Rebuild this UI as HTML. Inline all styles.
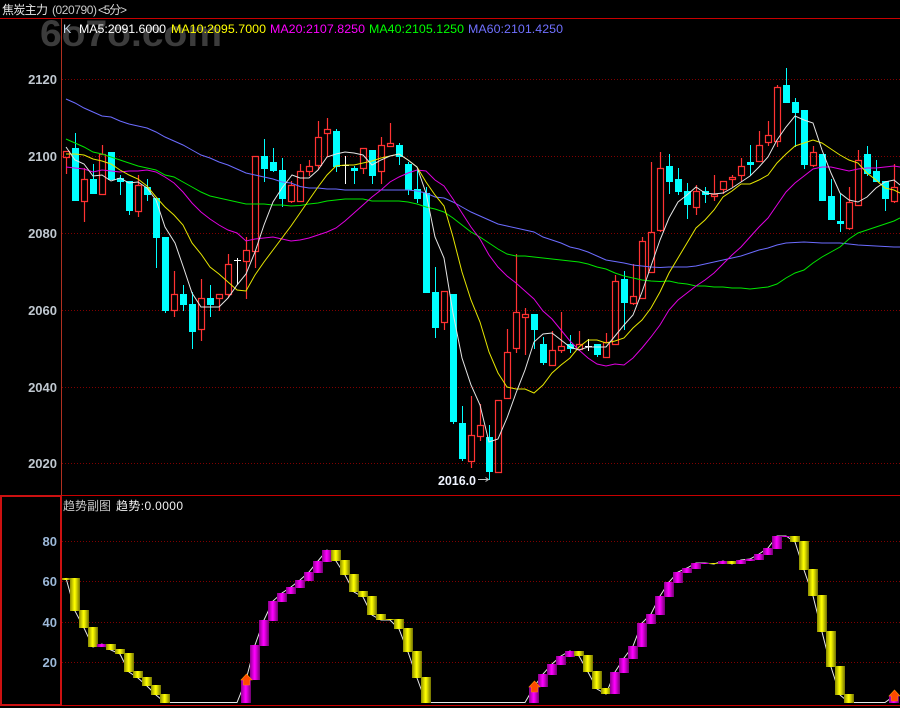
<!DOCTYPE html>
<html><head><meta charset="utf-8"><title>焦炭主力</title>
<style>html,body{margin:0;padding:0;background:#000;width:900px;height:708px;overflow:hidden}svg{display:block}
text{font-family:"Liberation Sans","Noto Sans CJK SC",sans-serif}</style></head><body>
<svg width="900" height="708" viewBox="0 0 900 708" xmlns="http://www.w3.org/2000/svg">
<defs>
<linearGradient id="y"><stop offset="0" stop-color="#8c8c00"/><stop offset=".45" stop-color="#ffff00"/><stop offset=".55" stop-color="#f0f000"/><stop offset="1" stop-color="#707000"/></linearGradient>
<linearGradient id="m"><stop offset="0" stop-color="#8c008c"/><stop offset=".45" stop-color="#ff00ff"/><stop offset=".55" stop-color="#f000f0"/><stop offset="1" stop-color="#700070"/></linearGradient>
</defs>
<rect width="900" height="708" fill="#000"/>
<text x="40" y="46" font-size="37" font-weight="bold" fill="#3c3c3c" textLength="182" lengthAdjust="spacingAndGlyphs">6o7o.com</text>
<rect width="900" height="18" fill="#000"/>
<g stroke="#800000" stroke-width="1" stroke-dasharray="1 2" fill="none">
<path d="M62 79.5H900M62 156.5H900M62 233.5H900M62 310.5H900M62 387.5H900M62 463.5H900M62 541.5H900M62 581.5H900M62 622.5H900M62 662.5H900"/>
</g>
<!-- cyan candles -->
<path stroke="#00ffff" fill="none" d="M75.5 133V148M93.5 164V179M120.5 175V178M120.5 182V195M129.5 211V215M147.5 179V187M147.5 195V201M156.5 238V268M165.5 311V313M183.5 285V294M183.5 305V311M192.5 292V304M192.5 332V349M210.5 285V298M210.5 305V317M264.5 139V156M264.5 169V182M273.5 148V162M273.5 171V172M282.5 158V170M282.5 199V207M336.5 129V131M336.5 167V172M354.5 166V168M354.5 171V184M372.5 176V184M399.5 143V145M399.5 157V165M408.5 162V164M408.5 190V195M417.5 170V189M417.5 199V203M426.5 187V193M435.5 267V292M435.5 328V338M453.5 422V424M462.5 406V423M462.5 459V461M489.5 425V437M489.5 472V480M534.5 330V349M543.5 337V344M543.5 363V365M570.5 335V344M570.5 349V353M597.5 355V357M624.5 271V279M624.5 303V330M669.5 154V166M669.5 182V194M678.5 168V179M678.5 192V195M687.5 183V191M687.5 205V219M705.5 187V191M705.5 195V203M750.5 145V162M750.5 165V176M786.5 68V85M795.5 98V102M795.5 113V147M804.5 165V169M831.5 179V196M840.5 194V221M840.5 224V232M867.5 146V154M867.5 174V176M876.5 160V171M885.5 199V211"/>
<path fill="#00ffff" d="M72 148h7V201h-7zM90 179h7V194h-7zM108 152h7V180h-7zM117 178h7V182h-7zM126 181h7V211h-7zM144 187h7V195h-7zM153 198h7V238h-7zM162 237h7V311h-7zM180 294h7V305h-7zM189 304h7V332h-7zM207 298h7V305h-7zM261 156h7V169h-7zM270 162h7V171h-7zM279 170h7V199h-7zM333 131h7V167h-7zM351 168h7V171h-7zM369 150h7V176h-7zM396 145h7V157h-7zM405 164h7V190h-7zM414 189h7V199h-7zM423 193h7V293h-7zM432 292h7V328h-7zM450 294h7V422h-7zM459 423h7V459h-7zM486 437h7V472h-7zM531 314h7V330h-7zM540 344h7V363h-7zM567 344h7V349h-7zM594 344h7V355h-7zM621 279h7V303h-7zM666 166h7V182h-7zM675 179h7V192h-7zM684 191h7V205h-7zM702 191h7V195h-7zM747 162h7V165h-7zM783 85h7V103h-7zM792 102h7V113h-7zM801 110h7V165h-7zM819 154h7V201h-7zM828 196h7V220h-7zM837 221h7V224h-7zM864 154h7V174h-7zM873 171h7V182h-7zM882 181h7V199h-7z"/>
<!-- red candles -->
<path stroke="#ff3232" stroke-width="1.2" fill="none" d="M63.5 151.5h6V157.5h-6zM66.5 158V174M81.5 179.5h6V201.5h-6zM84.5 168V179M84.5 202V222M99.5 154.5h6V194.5h-6zM102.5 145V154M135.5 185.5h6V211.5h-6zM138.5 175V185M138.5 212V217M171.5 294.5h6V310.5h-6zM174.5 271V294M174.5 311V317M198.5 298.5h6V329.5h-6zM201.5 279V298M201.5 330V341M216.5 294.5h6V298.5h-6zM219.5 299V311M225.5 264.5h6V294.5h-6zM228.5 254V264M228.5 295V298M243.5 250.5h6V261.5h-6zM246.5 237V250M246.5 262V299M252.5 156.5h6V251.5h-6zM255.5 252V268M288.5 185.5h6V201.5h-6zM291.5 181V185M291.5 202V203M297.5 171.5h6V201.5h-6zM300.5 164V171M306.5 166.5h6V171.5h-6zM309.5 160V166M309.5 172V176M315.5 137.5h6V165.5h-6zM318.5 121V137M318.5 166V170M324.5 129.5h6V133.5h-6zM327.5 118V129M327.5 134V157M360.5 148.5h6V168.5h-6zM363.5 169V174M378.5 145.5h6V171.5h-6zM381.5 137V145M381.5 172V184M387.5 143.5h6V146.5h-6zM390.5 123V143M441.5 291.5h6V322.5h-6zM444.5 323V330M468.5 435.5h6V461.5h-6zM471.5 396V435M471.5 462V468M477.5 425.5h6V436.5h-6zM480.5 404V425M480.5 437V441M495.5 400.5h6V472.5h-6zM504.5 352.5h6V398.5h-6zM507.5 329V352M513.5 312.5h6V348.5h-6zM516.5 254V312M516.5 349V353M522.5 314.5h6V317.5h-6zM525.5 308V314M525.5 318V355M549.5 350.5h6V365.5h-6zM552.5 331V350M558.5 346.5h6V350.5h-6zM561.5 312V346M561.5 351V353M576.5 344.5h6V349.5h-6zM579.5 331V344M579.5 350V351M603.5 342.5h6V357.5h-6zM606.5 333V342M612.5 281.5h6V344.5h-6zM615.5 275V281M630.5 296.5h6V303.5h-6zM633.5 264V296M633.5 304V305M639.5 241.5h6V298.5h-6zM642.5 237V241M648.5 232.5h6V272.5h-6zM651.5 162V232M657.5 168.5h6V230.5h-6zM660.5 152V168M660.5 231V232M693.5 191.5h6V207.5h-6zM696.5 185V191M696.5 208V215M711.5 194.5h6V196.5h-6zM714.5 175V194M714.5 197V201M720.5 181.5h6V189.5h-6zM723.5 190V194M729.5 177.5h6V179.5h-6zM732.5 175V177M732.5 180V187M738.5 166.5h6V175.5h-6zM741.5 158V166M741.5 176V182M756.5 145.5h6V161.5h-6zM759.5 131V145M765.5 135.5h6V142.5h-6zM768.5 121V135M768.5 143V146M774.5 87.5h6V141.5h-6zM777.5 85V87M777.5 142V147M810.5 152.5h6V165.5h-6zM813.5 146V152M813.5 166V167M846.5 202.5h6V228.5h-6zM849.5 187V202M849.5 229V230M855.5 160.5h6V205.5h-6zM858.5 150V160M891.5 187.5h6V201.5h-6zM894.5 164V187M894.5 202V203"/>
<!-- doji -->
<path stroke="#fff" fill="none" d="M237.5 258V285M234 260.5h7M345.5 156V184M342 165.5h7M588.5 339V351M585 346.5h7"/>
<!-- MAs -->
<g fill="none" stroke-width="1">
<polyline stroke="#6c6cff" points="66,99 75,103 84,108 93,112 102,116 111,117 120,121 129,124 138,126 147,128 156,132 165,137 174,141 183,145 192,150 201,155 210,158 219,162 228,165 237,169 246,173 255,175 264,177 273,179 282,182 291,183 300,186.5 309,188 318,188 327,189 336,189 345,190 354,190 363,190 372,190 381,190 390,190 399,190 408,190 417,191 426,193 435,197 444,198 453,202 462,207 471,212 480,216 489,220 498,224 507,226 516,228 525,230 534,232 543,237 552,240 561,243 570,247 579,249 588,252 597,256 606,260 615,261.5 624,263 633,265 642,266 651,267 660,267.5 669,267 678,267 687,267 696,266 705,264 714,262 723,260 732,258 741,256 750,253 759,250 768,248 777,245 786,243 795,242.5 804,242 813,242.5 822,243 831,243 840,243 849,244 858,245 867,245.5 876,246 885,246.5 894,247 900,247"/>
<polyline stroke="#00e600" points="66,139 75,143 84,147 93,152 102,154 111,157 120,160 129,163 138,166 147,168 156,170 165,175 174,177 183,182 192,187 201,192 210,196 219,198 228,200 237,202 246,204 255,204 264,204 273,205 282,205 291,206 300,205.5 309,204 318,203 327,201 336,200 345,199 354,199 363,199 372,201 381,201 390,201 399,201 408,202 417,204 426,207 435,209 444,212 453,218 462,225 471,232 480,237 489,243 498,249 507,254 516,256 525,256 534,257 543,258 552,259 561,260 570,261 579,262 588,264 597,267 606,269 615,273 624,276 633,278 642,280 651,281 660,281.5 669,281 678,283 687,284 696,286 705,286 714,287 723,287 732,288 741,288 750,289 759,288 768,287 777,284 786,278 795,273 804,270 813,263 822,257 831,252 840,247 849,239 858,233 867,230 876,227 885,224 894,221 900,218"/>
<polyline stroke="#e000e0" points="66,167 75,168 84,169 93,172 102,170 111,171 120,172 129,171 138,171 147,170 156,172 165,177 174,183 183,192 192,203 201,212 210,219 219,225 228,230 237,233 246,241 255,239 264,238 273,237 282,239 291,241 300,240 309,238 318,235 327,232 336,228 345,221 354,213 363,205 372,197 381,190 390,182 399,177 408,173 417,170 426,171 435,180 444,186 453,199 462,213 471,227 480,239 489,255 498,267 507,276 516,283 525,291 534,299 543,311 552,319 561,330 570,341 579,350 588,358 597,364 606,366 615,364 624,365 633,358 642,348 651,337 660,325 669,310 678,300 687,293 696,286 705,280 714,273 723,264 732,255 741,247 750,237 759,227 768,218 777,205 786,192 795,183 804,176 813,169 822,167 831,167 840,169 849,171 858,169 867,168 876,168 885,167 894,166 900,167"/>
<polyline stroke="#e6e600" points="66,154 75,154 84,155 93,159 102,161 111,164 120,170 129,175 138,179 147,186 156,197 165,207 174,215 183,225 192,243 201,254 210,267 219,274 228,282 237,290 246,291 255,275 264,262 273,250 282,238 291,226 300,213 309,200 318,187 327,175 336,166 345,165 354,165 363,163 372,161 381,158 390,156 399,154 408,160 417,167 426,182 435,195 444,206 453,237 462,272 471,300 480,322 489,352 498,373 507,387 516,389 525,389 534,393 543,385 552,373 561,365 570,358 579,347 588,340 597,340 606,343 615,341 624,338 633,328 642,320 651,308 660,292 669,273 678,258 687,243 696,228 705,220 714,210 723,197 732,191 741,184 750,184 759,180 768,175 777,163 786,154 795,146 804,143 813,140 822,143 831,149 840,155 849,160 858,163 867,173 876,180 885,188 894,190 900,193"/>
<polyline stroke="#e4e4e4" points="66,147 75,160 84,164 93,176 102,175 111,181 120,178 129,183 138,182 147,188 156,200 165,227 175,243 184,269 192,293 201,307 210,307 219,307 228,298 237,285 246,274 255,252 264,225 273,202 282,188 292,175 300,178 309,178 318,170 327,157 336,154 345,152 354,153 363,155 372,165 381,160 390,156 399,154 408,160 417,167 426,193 435,237 444,258 453,313 462,358 471,385 480,405 489,442 498,439 507,418 516,393 525,370 534,342 543,334 552,333 561,340 570,347 579,350 588,347 597,347 606,347 615,336 624,325 633,315 642,292 651,266 660,240 669,218 678,202 687,195 696,187 705,193 714,194 723,193 732,188 741,182 750,176 759,167 768,157 777,140 786,127 795,116 804,120 813,123 822,150 831,173 840,193 849,200 858,202 867,197 876,188 885,182 894,180 900,185"/>
</g>
<!-- lower trend line -->
<polyline fill="none" stroke="#e8e8e8" stroke-width="1" points="66,578 75,611 84,628 93,647 102,644 111,650 120,654 129,672 138,678 147,686 156,695 165,702.5 237,702.5 246,680 255,645 264,620 273,601 282,593 291,587 300,580 309,572 318,561 327,550 336,561 345,575 354,592 363,597 372,615 381,620 390,620 399,629 408,652 417,678 426,702.5 525,702.5 534,687 543,674 552,664 561,656 570,651 579,656 588,672 597,689 606,694 615,672 624,658 633,646 642,623 651,614 660,596 669,582 678,572 687,568 696,563 705,563 714,564 723,561 732,564 741,560 750,559 759,554 768,548 777,536 786,536 795,542 804,570 813,596 822,632 831,667 840,695 849,702.5 885,702.5 894,696"/>
<!-- lower bars -->
<rect x="62" y="578" width="8" height="2" fill="url(#y)"/>
<rect x="70" y="578" width="10" height="33" fill="url(#y)"/>
<rect x="79" y="610" width="10" height="18" fill="url(#y)"/>
<rect x="88" y="627" width="10" height="20" fill="url(#y)"/>
<rect x="97" y="644" width="10" height="3" fill="url(#m)"/>
<rect x="106" y="644" width="10" height="6" fill="url(#y)"/>
<rect x="115" y="649" width="10" height="5" fill="url(#y)"/>
<rect x="124" y="653" width="10" height="19" fill="url(#y)"/>
<rect x="133" y="671" width="10" height="7" fill="url(#y)"/>
<rect x="142" y="677" width="10" height="9" fill="url(#y)"/>
<rect x="151" y="685" width="10" height="10" fill="url(#y)"/>
<rect x="160" y="694" width="10" height="9" fill="url(#y)"/>
<rect x="241" y="680" width="10" height="23" fill="url(#m)"/>
<rect x="250" y="645" width="10" height="35" fill="url(#m)"/>
<rect x="259" y="620" width="10" height="26" fill="url(#m)"/>
<rect x="268" y="601" width="10" height="20" fill="url(#m)"/>
<rect x="277" y="593" width="10" height="9" fill="url(#m)"/>
<rect x="286" y="587" width="10" height="7" fill="url(#m)"/>
<rect x="295" y="580" width="10" height="8" fill="url(#m)"/>
<rect x="304" y="572" width="10" height="9" fill="url(#m)"/>
<rect x="313" y="561" width="10" height="12" fill="url(#m)"/>
<rect x="322" y="550" width="10" height="12" fill="url(#m)"/>
<rect x="331" y="550" width="10" height="11" fill="url(#y)"/>
<rect x="340" y="560" width="10" height="15" fill="url(#y)"/>
<rect x="349" y="574" width="10" height="18" fill="url(#y)"/>
<rect x="358" y="591" width="10" height="6" fill="url(#y)"/>
<rect x="367" y="596" width="10" height="19" fill="url(#y)"/>
<rect x="376" y="614" width="10" height="6" fill="url(#y)"/>
<rect x="385" y="619" width="10" height="1" fill="url(#y)"/>
<rect x="394" y="619" width="10" height="10" fill="url(#y)"/>
<rect x="403" y="628" width="10" height="24" fill="url(#y)"/>
<rect x="412" y="651" width="10" height="27" fill="url(#y)"/>
<rect x="421" y="677" width="10" height="26" fill="url(#y)"/>
<rect x="529" y="687" width="10" height="16" fill="url(#m)"/>
<rect x="538" y="674" width="10" height="13" fill="url(#m)"/>
<rect x="547" y="664" width="10" height="11" fill="url(#m)"/>
<rect x="556" y="656" width="10" height="9" fill="url(#m)"/>
<rect x="565" y="651" width="10" height="6" fill="url(#m)"/>
<rect x="574" y="651" width="10" height="5" fill="url(#y)"/>
<rect x="583" y="655" width="10" height="17" fill="url(#y)"/>
<rect x="592" y="671" width="10" height="18" fill="url(#y)"/>
<rect x="601" y="688" width="10" height="6" fill="url(#y)"/>
<rect x="610" y="672" width="10" height="22" fill="url(#m)"/>
<rect x="619" y="658" width="10" height="15" fill="url(#m)"/>
<rect x="628" y="646" width="10" height="13" fill="url(#m)"/>
<rect x="637" y="623" width="10" height="24" fill="url(#m)"/>
<rect x="646" y="614" width="10" height="10" fill="url(#m)"/>
<rect x="655" y="596" width="10" height="19" fill="url(#m)"/>
<rect x="664" y="582" width="10" height="15" fill="url(#m)"/>
<rect x="673" y="572" width="10" height="11" fill="url(#m)"/>
<rect x="682" y="568" width="10" height="5" fill="url(#m)"/>
<rect x="691" y="563" width="10" height="6" fill="url(#m)"/>
<rect x="700" y="563" width="10" height="1" fill="url(#m)"/>
<rect x="709" y="563" width="10" height="1" fill="url(#y)"/>
<rect x="718" y="561" width="10" height="3" fill="url(#m)"/>
<rect x="727" y="561" width="10" height="3" fill="url(#y)"/>
<rect x="736" y="560" width="10" height="4" fill="url(#m)"/>
<rect x="745" y="559" width="10" height="2" fill="url(#m)"/>
<rect x="754" y="554" width="10" height="6" fill="url(#m)"/>
<rect x="763" y="548" width="10" height="7" fill="url(#m)"/>
<rect x="772" y="536" width="10" height="13" fill="url(#m)"/>
<rect x="781" y="536" width="10" height="1" fill="url(#m)"/>
<rect x="790" y="536" width="10" height="6" fill="url(#y)"/>
<rect x="799" y="541" width="10" height="29" fill="url(#y)"/>
<rect x="808" y="569" width="10" height="27" fill="url(#y)"/>
<rect x="817" y="595" width="10" height="37" fill="url(#y)"/>
<rect x="826" y="631" width="10" height="36" fill="url(#y)"/>
<rect x="835" y="666" width="10" height="29" fill="url(#y)"/>
<rect x="844" y="694" width="10" height="9" fill="url(#y)"/>
<rect x="889" y="696" width="10" height="7" fill="url(#m)"/>
<!-- arrows -->
<g fill="#ff4a00" stroke="#ff8c00" stroke-width=".6">
<polygon points="246.5,674 252,680 249.5,680 249.5,685 243.5,685 243.5,680 241,680"/>
<polygon points="534.5,681 540,687 537.5,687 537.5,692 531.5,692 531.5,687 529,687"/>
<polygon points="894.5,690 900,696 897.5,696 897.5,701 891.5,701 891.5,696 889,696"/>
</g>
<!-- frame -->
<path fill="none" stroke="#c80000" d="M0 18.5H900M62 495.5H900M62 705.5H900"/>
<path fill="none" stroke="#b03020" d="M61.5 18V495"/>
<rect x="1" y="496" width="60" height="209" fill="none" stroke="#cc1111" stroke-width="2"/>
<!-- text -->
<text x="2" y="14" font-size="12" fill="#e8e8e8" textLength="46">焦炭主力</text>
<text x="52" y="14" font-size="12" fill="#c8c8c8" textLength="45">(020790)</text>
<text x="98" y="14" font-size="12" fill="#d8d8d8" textLength="29">&lt;5分&gt;</text>
<g font-size="12.4">
<text x="63" y="33" fill="#c8d8e8">K</text>
<text x="79" y="33" fill="#ffffff" textLength="87">MA5:2091.6000</text>
<text x="171" y="33" fill="#ffff00" textLength="95">MA10:2095.7000</text>
<text x="270" y="33" fill="#ff00ff" textLength="95">MA20:2107.8250</text>
<text x="369" y="33" fill="#00ff00" textLength="95">MA40:2105.1250</text>
<text x="468" y="33" fill="#7070ff" textLength="95">MA60:2101.4250</text>
</g>
<g font-size="13" font-weight="bold" fill="#c0c8d0" text-anchor="end">
<text x="57" y="84">2120</text>
<text x="57" y="161">2100</text>
<text x="57" y="238">2080</text>
<text x="57" y="315">2060</text>
<text x="57" y="392">2040</text>
<text x="57" y="468">2020</text>
</g>
<g font-size="13" font-weight="bold" fill="#9cb8d8" text-anchor="end">
<text x="57" y="546">80</text>
<text x="57" y="586">60</text>
<text x="57" y="627">40</text>
<text x="57" y="667">20</text>
</g>
<text x="438" y="485" font-size="12.5" font-weight="bold" fill="#f0f4ff" textLength="38">2016.0</text>
<path d="M478 479.5H488M485.5 477.5L488.5 479.5L485.5 481.5" fill="none" stroke="#c0c0c0"/>
<text x="63" y="510" font-size="12" fill="#c8c8c8">趋势副图</text>
<text x="116" y="510" font-size="12" fill="#f0f0f0" textLength="67">趋势:0.0000</text>
</svg>
</body></html>
